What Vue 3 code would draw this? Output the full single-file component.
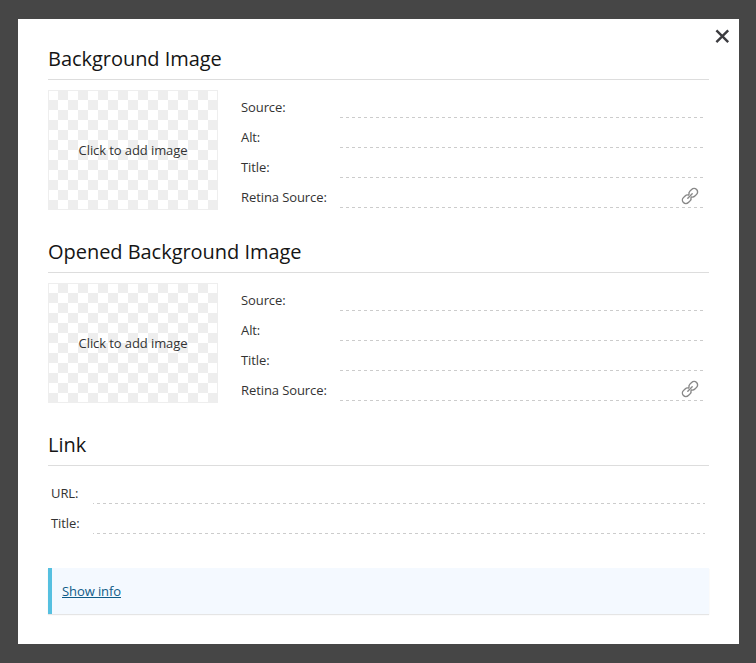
<script setup>
const imageSections = [
  { heading: 'Background Image', fields: ['Source:', 'Alt:', 'Title:', 'Retina Source:'] },
  { heading: 'Opened Background Image', fields: ['Source:', 'Alt:', 'Title:', 'Retina Source:'] },
]
const linkFields = ['URL:', 'Title:']
</script>

<template>
  <div class="overlay">
    <main class="modal">
      <button class="close" aria-label="Close">
        <svg width="15" height="15" viewBox="0 0 15 15"><path d="M1.4 1.4 13.2 13.2M13.2 1.4 1.4 13.2" /></svg>
      </button>
      <section v-for="s in imageSections" :key="s.heading" class="section">
        <h2>{{ s.heading }}</h2>
        <div class="media">
          <div class="picker"><span>Click to add image</span></div>
          <div class="fields">
            <div v-for="(f, i) in s.fields" :key="f" class="row">
              <span class="label">{{ f }}</span>
              <div class="line">
                <svg v-if="i === 3" class="chain" width="18" height="18" viewBox="0 0 18 18">
                  <g transform="rotate(-45 9 9)">
                    <path d="M8.6 7.2A3.5 3.5 0 0 0 5.6 5.5H3.2a3.5 3.5 0 0 0 0 7h2.4a3.5 3.5 0 0 0 3-1.7M9.4 7.2a3.5 3.5 0 0 1 3-1.7h2.4a3.5 3.5 0 0 1 0 7h-2.4a3.5 3.5 0 0 1-3-1.7M5.9 9h6.2" />
                  </g>
                </svg>
              </div>
            </div>
          </div>
        </div>
      </section>
      <section class="link">
        <h2>Link</h2>
        <div class="fields">
          <div v-for="f in linkFields" :key="f" class="row">
            <span class="label">{{ f }}</span>
            <div class="line"></div>
          </div>
        </div>
      </section>
      <div class="info"><a href="#">Show info</a></div>
    </main>
  </div>
</template>

<style>
body { background: #464646; }
</style>

<style scoped>
.overlay {
  box-sizing: border-box;
  height: 663px;
  padding: 19px 17px 19px 18px;
  background: #464646;
  font-family: "Open Sans", sans-serif;
  font-size: 13px;
  letter-spacing: -0.09px;
  color: #333;
}
.modal {
  position: relative;
  box-sizing: border-box;
  height: 625px;
  padding: 25px 30px 0;
  background: #fff;
}
.close {
  position: absolute;
  top: 10px;
  right: 9px;
  width: 15px;
  height: 15px;
  padding: 0;
  border: 0;
  background: none;
}
.close svg { display: block; fill: none; stroke: #3c3c40; stroke-width: 2.4; }
.section { height: 193px; }
h2 {
  box-sizing: border-box;
  height: 36px;
  margin: 0;
  border-bottom: 1px solid #ddd;
  font-size: 20px;
  font-weight: 400;
  line-height: 30px;
  letter-spacing: -0.04px;
  color: #151515;
}
.media { display: flex; padding-top: 10px; }
.picker {
  box-sizing: border-box;
  display: flex;
  align-items: center;
  justify-content: center;
  width: 170px;
  height: 120px;
  border: 1px solid #eee;
  background: conic-gradient(#eee 25%, #fff 0 50%, #eee 0 75%, #fff 0) border-box 0 0 / 20px 20px;
}
.fields { flex: 1; }
.row { display: flex; height: 30px; }
.label { box-sizing: border-box; line-height: 34px; white-space: nowrap; }
.line {
  position: relative;
  height: 28px;
  background: repeating-linear-gradient(90deg, #ccc 0 3px, transparent 3px 6px) 0 100% / 100% 1px no-repeat;
}
.media .fields { padding-left: 23px; }
.media .label { width: 99px; }
.media .line { width: 363px; }
.chain {
  position: absolute;
  right: 4px;
  top: 7px;
  fill: none;
  stroke: #888;
  stroke-width: 1.4;
  stroke-linecap: round;
}
.link .fields { padding: 10px 0 0 3px; }
.link .label { width: 42px; }
.link .line {
  width: 612px;
  background-image: repeating-linear-gradient(90deg, #ccc 0 1px, transparent 1px 4px, #ccc 4px 6px);
}
.info {
  box-sizing: border-box;
  height: 46px;
  margin-top: 32px;
  padding-left: 10px;
  border-left: 4px solid #56c0e0;
  background: #f4f9ff;
  box-shadow: 0 1px 1px rgba(0, 0, 0, 0.1);
  line-height: 46px;
}
.info a { color: #0f5c88; text-decoration: underline; }
</style>
